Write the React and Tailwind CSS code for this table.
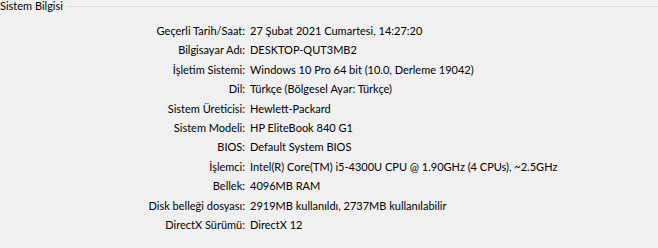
import React from 'react';

const rows = [
  ['Geçerli Tarih/Saat:', '27 Şubat 2021 Cumartesi, 14:27:20'],
  ['Bilgisayar Adı:', 'DESKTOP-QUT3MB2'],
  ['İşletim Sistemi:', 'Windows 10 Pro 64 bit (10.0, Derleme 19042)'],
  ['Dil:', 'Türkçe (Bölgesel Ayar: Türkçe)'],
  ['Sistem Üreticisi:', 'Hewlett-Packard'],
  ['Sistem Modeli:', 'HP EliteBook 840 G1'],
  ['BIOS:', 'Default System BIOS'],
  ['İşlemci:', 'Intel(R) Core(TM) i5-4300U CPU @ 1.90GHz (4 CPUs), ~2.5GHz'],
  ['Bellek:', '4096MB RAM'],
  ['Disk belleği dosyası:', '2919MB kullanıldı, 2737MB kullanılabilir'],
  ['DirectX Sürümü:', 'DirectX 12'],
];

const App = () => {
  return (
    <div className="w-[658px] h-[248px] bg-[#f0f0f0] text-black text-[11px] overflow-hidden" style={{ fontFamily: '"Lato", "Liberation Sans", sans-serif' }}>
      <div className="flex items-center h-[12px]">
        <span className="leading-[12px] pr-[3px]">Sistem Bilgisi</span>
        <div className="flex-1 h-px bg-[#dcdcdc]" />
      </div>
      <div className="mt-[9px] grid grid-cols-[245px_1fr]">
        {rows.map(([label, value]) => (
          <React.Fragment key={label}>
            <div className="text-right h-[19.4px] leading-[19.4px]">{label}</div>
            <div className="pl-[5px] h-[19.4px] leading-[19.4px] whitespace-nowrap">{value}</div>
          </React.Fragment>
        ))}
      </div>
    </div>
  );
};

export default App;
